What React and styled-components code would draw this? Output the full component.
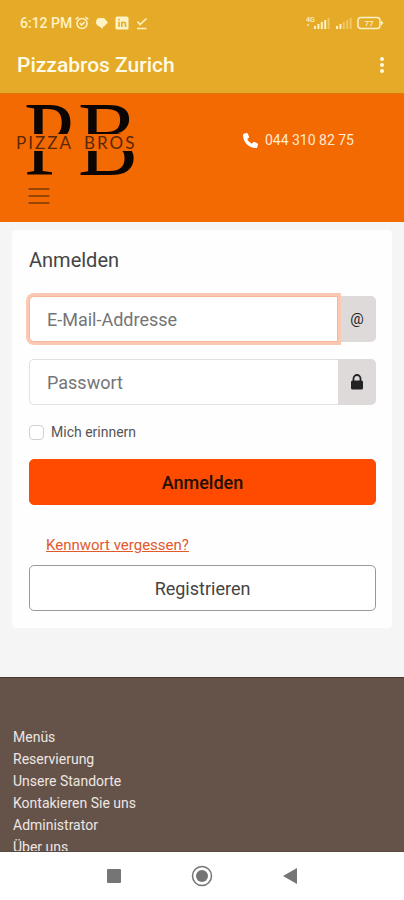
import React from "react";
import styled, { createGlobalStyle, css } from "styled-components";

const GlobalStyle = createGlobalStyle`
  *, *::before, *::after { box-sizing: border-box; }
  body { margin: 0; background: #f5f5f5; }
  button, input { font: inherit; }
`;

const Screen = styled.div`
  display: flex;
  flex-direction: column;
  height: 100vh;
  overflow: hidden;
  font-family: Roboto, "Noto Sans", sans-serif;
  color: #444;
`;

const AppHeader = styled.header`
  flex: none;
  background: #e5aa27;
  color: #fffbe6;
  border-bottom: 1px solid #e07a10;
`;

const StatusBar = styled.div`
  display: flex;
  align-items: center;
  justify-content: space-between;
  height: 46px;
  padding: 0 20px;
  font-size: 14px;
  font-weight: 500;
  color: #fff2c4;
`;

const StatusGroup = styled.div`
  display: flex;
  align-items: center;
  gap: ${(p) => p.$gap}px;
`;

const TitleBar = styled.div`
  display: flex;
  align-items: center;
  justify-content: space-between;
  height: 47px;
  padding: 0 20px 9px 17px;
`;

const AppTitle = styled.h1`
  margin: 0;
  font-size: 21px;
  line-height: 24px;
  font-weight: 500;
`;

const IconButton = styled.button`
  display: flex;
  padding: 0;
  border: 0;
  background: none;
  color: inherit;
  cursor: pointer;
`;

const WebView = styled.div`
  flex: 1;
  min-height: 0;
  overflow: hidden;
  background: #f5f5f5;
`;

const SiteHeader = styled.div`
  display: grid;
  grid-template-columns: auto auto;
  justify-content: space-between;
  align-items: center;
  row-gap: 6px;
  padding: 9px 50px 17px 16px;
  background: #f46a02;
`;

const LogoLink = styled.a`
  display: flex;
`;

const Phone = styled.a`
  display: flex;
  align-items: center;
  gap: 7px;
  margin-bottom: 4px;
  font-size: 14px;
  line-height: 20px;
  color: #ffe9d2;
  text-decoration: none;
`;

const MenuButton = styled(IconButton)`
  justify-self: start;
  margin-left: 12px;
  color: #7a3a08;
`;

const Card = styled.main`
  margin: 8px 12px 49px;
  padding: 16px 16px 17px 17px;
  background: #fefefe;
  border-radius: 4px;
`;

const CardTitle = styled.h2`
  margin: 0 0 22px;
  font-size: 20px;
  line-height: 28px;
  font-weight: 400;
  color: #444;
`;

const Form = styled.form`
  display: flex;
  flex-direction: column;
`;

const InputGroup = styled.div`
  display: flex;
  height: 46px;
  margin-bottom: 17px;
`;

const TextInput = styled.input`
  flex: 1;
  min-width: 0;
  padding: 0 17px;
  border: 1px solid #e2e0e0;
  border-right: 0;
  border-radius: 5px 0 0 5px;
  background: #fff;
  font-size: 18px;
  color: #444;
  outline: none;
  &::placeholder { color: #757575; opacity: 1; }
  ${(p) =>
    p.$active &&
    css`
      z-index: 1;
      border: 1px solid #f5b79c;
      box-shadow: 0 0 0 3px #fbc9b3;
    `}
`;

const AddOn = styled.label`
  display: flex;
  align-items: center;
  justify-content: center;
  width: 38px;
  border-radius: 0 5px 5px 0;
  background: #dfdada;
  color: #222;
  font-size: 15px;
`;

const CheckLabel = styled.label`
  display: flex;
  align-items: center;
  gap: 7px;
  margin-bottom: 17px;
  font-size: 14px;
  line-height: 20px;
  color: #555;
`;

const Checkbox = styled.input`
  appearance: none;
  width: 15px;
  height: 15px;
  margin: 0;
  border: 1px solid #d0d0d0;
  border-radius: 4px;
  background: #fff;
  &:checked { background: #ff4b00; }
`;

const Button = styled.button`
  height: 46px;
  border: 1px solid ${(p) => (p.$primary ? "#ff4b00" : "#999")};
  border-radius: 5px;
  background: ${(p) => (p.$primary ? "#ff4b00" : "#fff")};
  color: ${(p) => (p.$primary ? "#1c0e08" : "#444")};
  font-size: 18px;
  font-weight: ${(p) => (p.$primary ? 500 : 400)};
  cursor: pointer;
`;

const ForgotLink = styled.a`
  align-self: flex-start;
  margin: 30px 0 10px 17px;
  font-size: 15px;
  line-height: 20px;
  color: #e2592b;
`;

const Footer = styled.footer`
  padding: 48px 13px;
  border-top: 1px solid #4b3730;
  background: #65534a;
`;

const FooterList = styled.ul`
  margin: 0;
  padding: 0;
  list-style: none;
`;

const FooterLink = styled.a`
  display: block;
  font-size: 14px;
  line-height: 22px;
  color: #eee6e2;
  text-decoration: none;
`;

const SystemNav = styled.nav`
  display: grid;
  grid-template-columns: repeat(3, 88px);
  justify-content: center;
  justify-items: center;
  align-items: center;
  flex: none;
  height: 49px;
  background: #fff;
  color: #757575;
  border-top: 1px solid #5a493f;
`;

const AlarmIcon = () => (
  <svg width="14" height="14" viewBox="0 0 14 14" fill="none" stroke="currentColor" strokeWidth="1.6">
    <circle cx="7" cy="7.5" r="5" />
    <path d="M.8 3.4 3.6 1M13.2 3.4 10.4 1M4.8 7l1.8 2 3-3" />
  </svg>
);

const TagIcon = () => (
  <svg width="12" height="12" viewBox="0 0 12 12" fill="currentColor">
    <path d="M3 1h5l4 4.500L8 9.500H7L6.500 12 3.500 9.500C1.500 9 0 7.500 0 5.300S1.300 1 3 1z" />
  </svg>
);

const LinkedInIcon = () => (
  <svg width="14" height="14" viewBox="0 0 14 14">
    <rect x=".5" y=".5" width="13" height="13" rx="1.5" fill="currentColor" />
    <g fill="none" stroke="#e5aa27" strokeWidth="1.6">
      <path d="M4 5.8v5.2M4 3v1.6M6.8 11V5.8M6.8 8c0-2.400 3.700-2.400 3.700 0v3" />
    </g>
  </svg>
);

const DoneIcon = () => (
  <svg width="12" height="13" viewBox="0 0 12 13" fill="none" stroke="currentColor" strokeWidth="1.6">
    <path d="M1.500 4.500 4 7.500l6.500-6M1 11.500h9.500" />
  </svg>
);

const SignalIcon = ({ network, level }) => (
  <svg width={network ? 25 : 18} height="14" viewBox={network ? "0 0 25 14" : "7 0 18 14"} fill="currentColor">
    {network && (
      <>
        <text x="0" y="6" fontSize="7" fontFamily="Roboto, sans-serif">4G</text>
        <path d="M1 8h2v2H1z" opacity=".6" />
      </>
    )}
    {[0, 1, 2, 3, 4].map((i) => (
      <rect key={i} x={8 + i * 3.4} y={10 - i * 2} width="2" height={3 + i * 2} opacity={i < level ? 1 : 0.4} />
    ))}
  </svg>
);

const BatteryIcon = () => (
  <svg width="27" height="14" viewBox="0 0 27 14">
    <rect x="1" y="1.500" width="22" height="11" rx="3" fill="none" stroke="currentColor" strokeWidth="1.5" />
    <path d="M24 4.500 26.500 7 24 9.500z" fill="currentColor" />
    <text x="12" y="10" textAnchor="middle" fontSize="8" fontFamily="Roboto, sans-serif" fill="currentColor">77</text>
  </svg>
);

const DotsIcon = () => (
  <svg width="4" height="18" viewBox="0 0 4 18" fill="currentColor">
    <circle cx="2" cy="3" r="2" />
    <circle cx="2" cy="9" r="2" />
    <circle cx="2" cy="15" r="2" />
  </svg>
);

const Monogram = ({ y }) => (
  <g fontFamily="Liberation Serif, serif" fontSize="90" fill="#0b0603">
    <text x="8" y={y}>P</text>
    <text x="62" y={y}>B</text>
  </g>
);

const Logo = () => (
  <svg width="124" height="78" viewBox="0 0 124 78" role="img" aria-label="Pizza Bros">
    <defs>
      <clipPath id="logo-top"><rect width="124" height="31" /></clipPath>
      <clipPath id="logo-bottom"><rect y="48" width="124" height="30" /></clipPath>
    </defs>
    <g clipPath="url(#logo-top)"><Monogram y={62} /></g>
    <g clipPath="url(#logo-bottom)"><Monogram y={72} /></g>
    <g fontFamily="Lato, sans-serif" fontSize="17" letterSpacing="2" fill="#5c2705">
      <text x="0" y="46">PIZZA</text>
      <text x="68" y="46">BROS</text>
    </g>
  </svg>
);

const PhoneIcon = () => (
  <svg width="15" height="15" viewBox="0 0 512 512" fill="#fff">
    <path d="M164.900 24.600c-7.700-18.600-28-28.500-47.400-23.200l-88 24C12.100 30.200 0 46 0 64c0 247.400 200.600 448 448 448 18 0 33.800-12.100 38.600-29.500l24-88c5.300-19.400-4.600-39.700-23.200-47.400l-96-40c-16.300-6.800-35.200-2.100-46.300 11.600L304.700 368C234.300 334.700 177.300 277.700 144 207.300l49.300-40.300c13.700-11.200 18.400-30 11.600-46.300z" />
  </svg>
);

const MenuIcon = () => (
  <svg width="22" height="18" viewBox="0 0 22 18" stroke="currentColor" strokeWidth="1.5">
    <path d="M.5 2h21M.5 9h21M.5 16h21" />
  </svg>
);

const LockIcon = () => (
  <svg width="14" height="16" viewBox="0 0 14 16">
    <path d="M3.500 8V4.500a3.500 3.500 0 0 1 7 0V8" fill="none" stroke="currentColor" strokeWidth="1.8" />
    <rect x="1" y="6.500" width="12" height="9" rx="1.5" fill="currentColor" />
  </svg>
);

const RecentsIcon = () => (
  <svg width="16" height="16" viewBox="0 0 16 16">
    <rect x="1" y="1" width="14" height="14" rx="1" fill="currentColor" />
  </svg>
);

const HomeIcon = () => (
  <svg width="22" height="22" viewBox="0 0 22 22">
    <circle cx="11" cy="11" r="9.5" fill="none" stroke="currentColor" strokeWidth="1.5" />
    <circle cx="11" cy="11" r="6" fill="currentColor" />
  </svg>
);

const BackIcon = () => (
  <svg width="16" height="18" viewBox="0 0 16 18">
    <path d="M1 9 15 1v16z" fill="currentColor" />
  </svg>
);

const footerLinks = [
  "Menüs",
  "Reservierung",
  "Unsere Standorte",
  "Kontakieren Sie uns",
  "Administrator",
  "Über uns",
];

export default function App() {
  return (
    <Screen>
      <GlobalStyle />
      <AppHeader>
        <StatusBar>
          <StatusGroup $gap={7}>
            <StatusGroup $gap={3}>
              <span>6:12 PM</span>
              <AlarmIcon />
            </StatusGroup>
            <TagIcon />
            <LinkedInIcon />
            <DoneIcon />
          </StatusGroup>
          <StatusGroup $gap={4}>
            <SignalIcon network level={4} />
            <SignalIcon level={2} />
            <BatteryIcon />
          </StatusGroup>
        </StatusBar>
        <TitleBar>
          <AppTitle>Pizzabros Zurich</AppTitle>
          <IconButton type="button" aria-label="Mehr">
            <DotsIcon />
          </IconButton>
        </TitleBar>
      </AppHeader>

      <WebView>
        <SiteHeader>
          <LogoLink href="#home"><Logo /></LogoLink>
          <Phone href="tel:0443108275">
            <PhoneIcon />
            044 310 82 75
          </Phone>
          <MenuButton type="button" aria-label="Menü"><MenuIcon /></MenuButton>
        </SiteHeader>

        <Card>
          <CardTitle>Anmelden</CardTitle>
          <Form onSubmit={(e) => e.preventDefault()}>
            <InputGroup>
              <TextInput id="email" type="email" placeholder="E-Mail-Addresse" aria-label="E-Mail-Addresse" $active />
              <AddOn htmlFor="email">@</AddOn>
            </InputGroup>
            <InputGroup>
              <TextInput id="password" type="password" placeholder="Passwort" aria-label="Passwort" />
              <AddOn htmlFor="password" aria-label="Passwort"><LockIcon /></AddOn>
            </InputGroup>
            <CheckLabel>
              <Checkbox type="checkbox" />
              Mich erinnern
            </CheckLabel>
            <Button type="submit" $primary>Anmelden</Button>
            <ForgotLink href="#reset">Kennwort vergessen?</ForgotLink>
            <Button type="button">Registrieren</Button>
          </Form>
        </Card>

        <Footer>
          <FooterList>
            {footerLinks.map((label) => (
              <li key={label}><FooterLink href="#">{label}</FooterLink></li>
            ))}
          </FooterList>
        </Footer>
      </WebView>

      <SystemNav>
        <IconButton type="button" aria-label="Übersicht"><RecentsIcon /></IconButton>
        <IconButton type="button" aria-label="Startseite"><HomeIcon /></IconButton>
        <IconButton type="button" aria-label="Zurück"><BackIcon /></IconButton>
      </SystemNav>
    </Screen>
  );
}
